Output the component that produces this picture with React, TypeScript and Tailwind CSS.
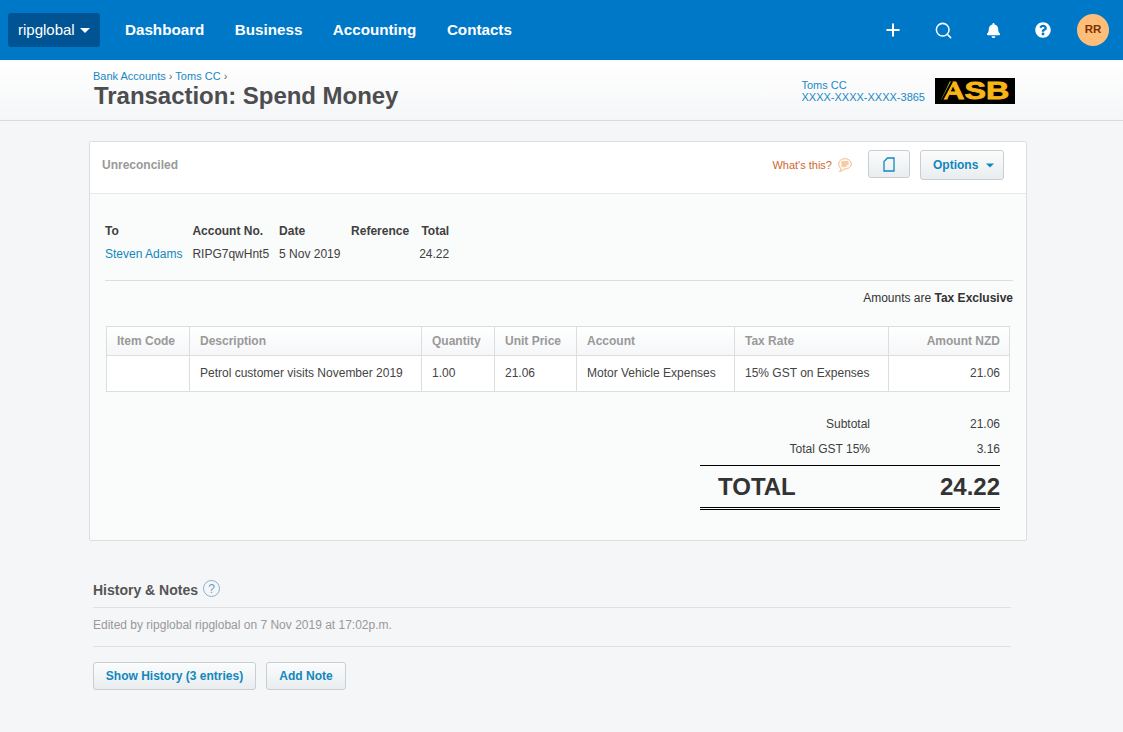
import { FaBell, FaQuestionCircle } from "react-icons/fa";
import { Plus, Search } from "lucide-react";

function Caret({ className }: { className: string }) {
  return (
    <svg width="10" height="5" viewBox="0 0 10 5" className={className}>
      <path d="M0 0h10L5 5z" fill="currentColor" />
    </svg>
  );
}

// Top nav
function TopNav() {
  return (
    <header className="h-[60px] bg-[#0078c8] flex items-center pl-2 pr-[14px] text-white">
      <button className="h-[34px] w-[92px] rounded-[3px] bg-[#005493] flex items-center pl-[10px] gap-[5px] text-[15px]">
        ripglobal
        <Caret className="text-white" />
      </button>
      <nav className="flex ml-[25px] gap-[30.5px] text-[15.2px] font-bold">
        <a href="#">Dashboard</a>
        <a href="#">Business</a>
        <a href="#">Accounting</a>
        <a href="#">Contacts</a>
      </nav>
      <div className="ml-auto flex items-center">
        <div className="w-[50px] flex justify-center">
          <Plus size={20} strokeWidth={2.4} />
        </div>
        <div className="w-[50px] flex justify-center">
          <Search size={19} strokeWidth={1.9} />
        </div>
        <div className="w-[50px] flex justify-center">
          <FaBell size={15} />
        </div>
        <div className="w-[50px] flex justify-center">
          <FaQuestionCircle size={16} />
        </div>
        <div className="ml-[9px] w-8 h-8 rounded-full bg-[#ffbd7a] text-[#7a3100] text-[11.5px] font-bold flex items-center justify-center">
          RR
        </div>
      </div>
    </header>
  );
}

// Breadcrumb + title strip
function PageHeader() {
  return (
    <div className="h-[61px] border-b border-[#d9dadb] bg-gradient-to-b from-white to-[#f5f6f8] pl-[93px] pr-[108px] flex justify-between">
      <div className="pt-[10px]">
        <p className="text-[11px] leading-[12px] text-[#1a88c4]">
          Bank Accounts <span className="text-[#666]">›</span> Toms CC <span className="text-[#666]">›</span>
        </p>
        <h1 className="ml-px text-[24px] leading-[27px] tracking-[-0.04px] font-bold text-[#4d4d4f]">
          Transaction: Spend Money
        </h1>
      </div>
      <div className="flex items-start pt-[18px]">
        <div className="text-[11px] leading-[12px] text-[#1a88c4] mt-px">
          <p>Toms CC</p>
          <p>XXXX-XXXX-XXXX-3865</p>
        </div>
        <div className="relative ml-[10px] w-[80px] h-[26px] bg-black flex items-center justify-center overflow-hidden">
          <span className="text-[#f7b616] text-[23px] leading-none font-bold scale-x-[1.4] [-webkit-text-stroke:0.8px_#f7b616]">
            ASB
          </span>
          <span className="absolute left-[11px] top-[2px] h-[22px] w-[2px] bg-black rotate-[28deg]" />
        </div>
      </div>
    </div>
  );
}

const btn =
  "border border-[#c9ced2] rounded-[3px] bg-gradient-to-b from-[#fbfcfc] to-[#e9edef] text-[#1187bd] text-xs font-bold";

function Summary() {
  return (
    <div className="flex text-xs text-[#404040]">
      <div className="mr-[10px]">
        <p className="font-bold h-[23px]">To</p>
        <p className="text-[#1187bd]">Steven Adams</p>
      </div>
      <div className="mr-[10px]">
        <p className="font-bold h-[23px]">Account No.</p>
        <p>RIPG7qwHnt5</p>
      </div>
      <div className="mr-[10px] w-[62px]">
        <p className="font-bold h-[23px]">Date</p>
        <p>5 Nov 2019</p>
      </div>
      <div className="mr-[10px]">
        <p className="font-bold h-[23px]">Reference</p>
      </div>
      <div className="text-right">
        <p className="font-bold h-[23px]">Total</p>
        <p>24.22</p>
      </div>
    </div>
  );
}

const th = "border border-[#dcdddd] px-[10px] text-left font-bold text-[#999]";
const td = "border border-[#dcdddd] px-[10px] pb-[2px] text-[#444]";

function LineItems() {
  return (
    <table className="ml-px w-[903px] table-fixed border-collapse text-xs">
      <colgroup>
        <col className="w-[83px]" />
        <col className="w-[232px]" />
        <col className="w-[73px]" />
        <col className="w-[82px]" />
        <col className="w-[158px]" />
        <col className="w-[154px]" />
        <col className="w-[121px]" />
      </colgroup>
      <thead>
        <tr className="h-[29px] bg-gradient-to-b from-white to-[#f5f6f8]">
          <th className={th}>Item Code</th>
          <th className={th}>Description</th>
          <th className={th}>Quantity</th>
          <th className={th}>Unit Price</th>
          <th className={th}>Account</th>
          <th className={th}>Tax Rate</th>
          <th className={th + " !text-right !pr-[9px]"}>Amount NZD</th>
        </tr>
      </thead>
      <tbody className="bg-white">
        <tr className="h-[36px]">
          <td className={td}></td>
          <td className={td}>Petrol customer visits November 2019</td>
          <td className={td}>1.00</td>
          <td className={td}>21.06</td>
          <td className={td}>Motor Vehicle Expenses</td>
          <td className={td}>15% GST on Expenses</td>
          <td className={td + " text-right !pr-[9px]"}>21.06</td>
        </tr>
      </tbody>
    </table>
  );
}

function Totals() {
  return (
    <div className="ml-auto mr-[11px] mt-[19px] w-[300px] text-xs text-[#404040]">
      <div className="flex h-[25px] items-center">
        <span className="w-[170px] text-right">Subtotal</span>
        <span className="flex-1 text-right">21.06</span>
      </div>
      <div className="flex h-[25px] items-center">
        <span className="w-[170px] text-right">Total GST 15%</span>
        <span className="flex-1 text-right">3.16</span>
      </div>
      <div className="mt-[4px] h-[42px] border-t border-black flex items-center justify-between pl-[18px] text-[24px] font-bold text-[#333]">
        <span>TOTAL</span>
        <span>24.22</span>
      </div>
      <div className="h-[3px] border-y border-black" />
    </div>
  );
}

function TransactionCard() {
  return (
    <section className="mt-5 ml-[89px] w-[938px] h-[400px] border border-[#dcdddd] rounded-[2px] bg-[#fafbfb]">
      <div className="h-[52px] bg-white border-b border-[#e8e9e9] flex items-start pt-2 pl-3 pr-[22px]">
        <span className="h-[30px] flex items-center text-xs font-bold text-[#999]">Unreconciled</span>
        <span className="ml-auto h-[30px] flex items-center text-[11px] text-[#d0672c]">What's this?</span>
        <svg width="14" height="14" viewBox="0 0 14 14" className="ml-[6px] mr-[16px] mt-2" fill="none">
          <path
            d="M7 .7c3.400 0 6.300 2.200 6.300 5.200S10.400 11 7 11H6c-1 1.400-2.500 2.300-4.500 2.500.8-.8 1.400-1.700 1.500-3C1.500 9.800.7 8 .7 5.900.7 2.900 3.600.7 7 .7z"
            fill="#fff8f1"
            stroke="#f5b98a"
          />
          <path d="M3.500 4h7M3.500 6h7M3.500 8h5" stroke="#e8924f" strokeWidth="0.9" />
        </svg>
        <button className={btn + " w-[42px] h-[28px] flex items-center justify-center"}>
          <svg width="12" height="15" viewBox="0 0 12 15" fill="none">
            <path d="M4.500 1H11v13H1V4.500z" stroke="#1187bd" strokeWidth="1.3" />
          </svg>
        </button>
        <button className={btn + " ml-[10px] w-[84px] h-[30px] flex items-center pl-3 gap-[8px]"}>
          Options
          <Caret className="text-[#1187bd] w-2" />
        </button>
      </div>
      <div className="px-[15px] pt-[29px]">
        <Summary />
        <div className="mt-[18px] border-t border-[#dcdddd] w-[908px]" />
        <p className="w-[908px] mt-[9px] text-right text-xs text-[#333]">
          Amounts are <b>Tax Exclusive</b>
        </p>
        <div className="mt-[20px]">
          <LineItems />
        </div>
        <Totals />
      </div>
    </section>
  );
}

function History() {
  return (
    <section className="mt-[39px] ml-[93px] w-[918px]">
      <div className="h-[28px] flex items-start border-b border-[#e0e1e2]">
        <h2 className="text-sm font-bold text-[#555]">History &amp; Notes</h2>
        <span className="ml-[5px] w-[17px] h-[17px] rounded-full border border-[#8cb0d0] text-[#6d9cc4] text-xs flex items-center justify-center">
          ?
        </span>
      </div>
      <p className="h-[39px] pb-1 flex items-center text-xs text-[#999] border-b border-[#e0e1e2]">
        Edited by ripglobal ripglobal on 7 Nov 2019 at 17:02p.m.
      </p>
      <div className="mt-[15px] flex gap-[10px]">
        <button className={btn + " w-[163px] h-[28px]"}>Show History (3 entries)</button>
        <button className={btn + " w-[80px] h-[28px]"}>Add Note</button>
      </div>
    </section>
  );
}

export default function App() {
  return (
    <main className="min-h-[732px] bg-[#f5f6f8] font-['Liberation_Sans',Arial,sans-serif]">
      <TopNav />
      <PageHeader />
      <TransactionCard />
      <History />
    </main>
  );
}
